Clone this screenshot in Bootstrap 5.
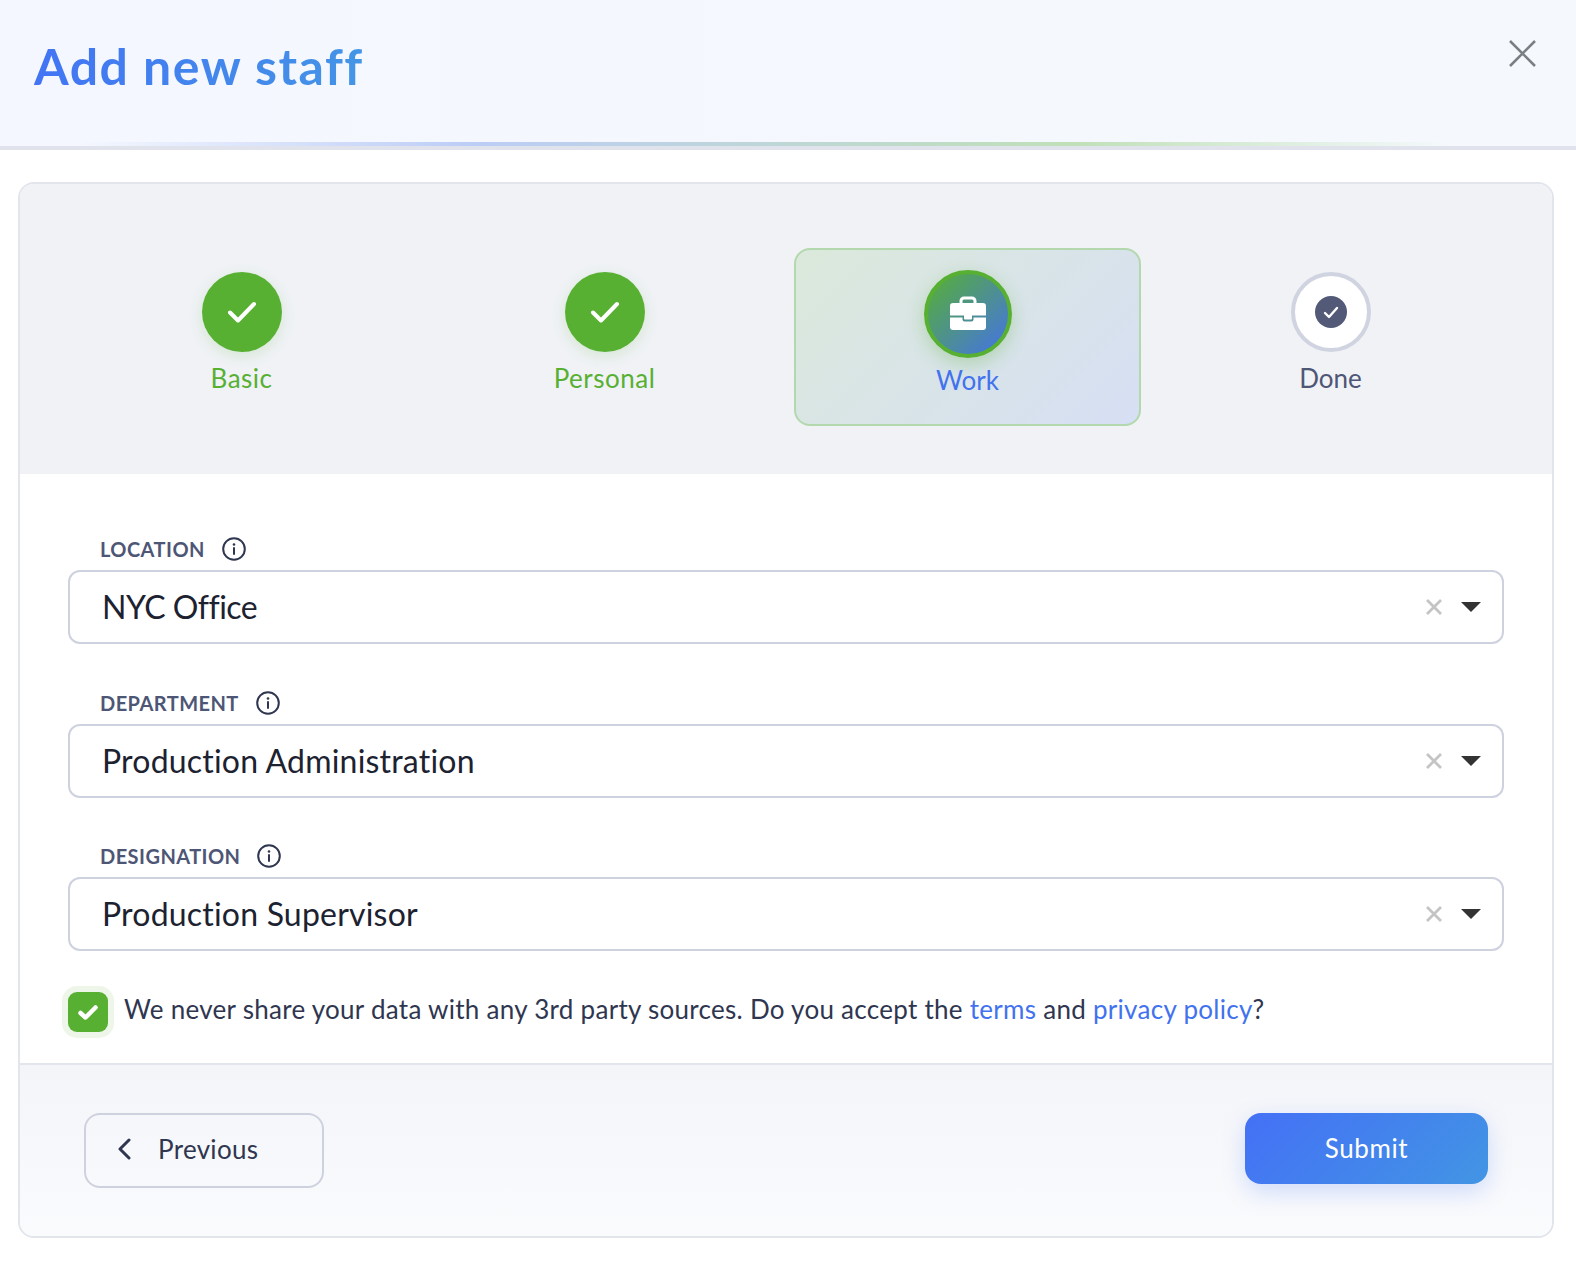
<!DOCTYPE html>
<html lang="en">
<head>
    <meta charset="UTF-8">
    <meta name="viewport" content="width=device-width, initial-scale=1.0">
    <title>Add new staff</title>
    <link href="https://cdn.jsdelivr.net/npm/bootstrap@5.3.0/dist/css/bootstrap.min.css" rel="stylesheet">
    <style>
        body { font-family: "Lato", "Noto Sans", sans-serif; font-variant-ligatures: none; background: #fff; color: #1c2230; }
        .staff-head { height: 150px; background: linear-gradient(90deg, #f4f7ff, #f5f9fd); border-bottom: 4px solid #e0e3ec; padding: 0 40px 0 34px; position: relative; }
        .staff-head::after { content: ""; position: absolute; left: 0; right: 0; bottom: 0; height: 4px; background: linear-gradient(90deg, rgba(192,207,247,0) 5%, #bccdf6 30%, #c0e0b8 68%, rgba(192,224,184,0) 92%); }
        .staff-title { font-size: 50px; font-weight: 700; letter-spacing: 1.5px; line-height: 1; margin: 0; padding-top: 41px; color: #4280ee; background: linear-gradient(90deg, #4274f4, #4495e6); -webkit-background-clip: text; background-clip: text; -webkit-text-fill-color: transparent; }
        .close-x { margin-top: 40px; }
        .staff-card { margin: 32px 22px 0 18px; border: 2px solid #e2e5ec; border-radius: 16px; overflow: hidden; }
        .stepper { background: #f0f2f6; padding: 64px 48px 48px; }
        .step-box { height: 178px; padding-top: 22px; text-align: center; font-size: 26px; line-height: 34px; border: 2px solid transparent; border-radius: 16px; }
        .step-dot { width: 80px; height: 80px; border-radius: 50%; margin: 0 auto 9px; display: flex; align-items: center; justify-content: center; }
        .step-green { color: #58b033; letter-spacing: .5px; }
        .step-green .step-dot { background: #58b033; box-shadow: 0 4px 14px rgba(88,176,51,.18); }
        .step-now { color: #4272ee; padding-top: 20px; background: linear-gradient(135deg, #dbe9db, #d6dff4); border-color: #b3d8ae; }
        .step-now .step-dot { width: 88px; height: 88px; border: 4px solid #58b033; background: linear-gradient(135deg, #58b033, #4372e8); box-shadow: 0 6px 18px rgba(88,176,51,.3); margin-bottom: 5px; }
        .step-now svg { margin-bottom: 2px; }
        .step-todo { color: #4e5676; }
        .step-todo .step-dot { background: #fff; border: 4px solid #d0d4e0; }
        .todo-core { width: 32px; height: 32px; border-radius: 50%; background: #525a78; display: flex; align-items: center; justify-content: center; }
        .staff-body { padding: 57px 48px 31px; background: #fff; }
        .field-block { margin-bottom: 40.500px; }
        .field-label { display: flex; align-items: center; gap: 17px; height: 36px; margin: 0 0 3px 32px; font-size: 20px; font-weight: 700; letter-spacing: .45px; color: #4e5676; }
        .field-box { display: flex; align-items: center; height: 74px; padding: 0 21px 0 32px; border: 2px solid #ced2df; border-radius: 12px; font-size: 32px; letter-spacing: .2px; color: #1c2230; background: #fff; }
        .field-box span { flex-grow: 1; }
        .field-box span.tight-text { letter-spacing: -.5px; }
        .field-clear { margin-right: 19px; }
        .caret-down { width: 0; height: 0; border-left: 10px solid transparent; border-right: 10px solid transparent; border-top: 10px solid #333; }
        .terms-row { display: flex; align-items: center; gap: 16px; font-size: 26px; line-height: 32px; letter-spacing: .28px; color: #2f3650; }
        .terms-row > div { margin-bottom: 6px; }
        .terms-row a { color: #4272ee; text-decoration: none; }
        .terms-check.form-check-input { width: 40px; height: 40px; margin: 0; flex-shrink: 0; border: 0; border-radius: 9px; box-shadow: 0 0 0 6px #eef6ea; background-color: #58b033; background-size: 24px; background-image: url("data:image/svg+xml,%3Csvg xmlns='http://www.w3.org/2000/svg' viewBox='0 0 24 24'%3E%3Cpath d='M4.500 13l5 4.500L19.500 7.500' fill='none' stroke='%23fff' stroke-width='4.500' stroke-linecap='round' stroke-linejoin='round'/%3E%3C/svg%3E"); }
        .staff-foot { display: flex; justify-content: space-between; align-items: flex-start; padding: 48px 64px; border-top: 2px solid #e2e5ec; background: linear-gradient(180deg, #f4f5f9, #fafbfd); }
        .btn.btn-prev { display: flex; align-items: center; gap: 27px; width: 240px; height: 75px; padding: 0 0 2px 31px; border: 2px solid #ced2df; border-radius: 16px; font-size: 26px; letter-spacing: .3px; color: #2f3650; background: transparent; }
        .btn.btn-submit { width: 243px; height: 71px; border: 0; border-radius: 16px; font-size: 26px; letter-spacing: .6px; color: #fff; background: linear-gradient(135deg, #4470f6, #4295e4); box-shadow: 0 8px 24px rgba(66,112,246,.22); }
    </style>
</head>
<body>
    <div class="staff-head d-flex justify-content-between align-items-start">
        <h1 class="staff-title">Add new staff</h1>
        <svg class="close-x" width="27" height="27" viewBox="0 0 27 27"><path d="M1 1l25 25M26 1L1 26" stroke="#7a7f85" stroke-width="2.600" fill="none"/></svg>
    </div>

    <div class="staff-card">
        <div class="stepper">
            <div class="row gx-3">
                <div class="col-3"><div class="step-box step-green">
                    <div class="step-dot"><svg width="30" height="22" viewBox="0 0 30 22"><path d="M3 11.500l8 8L27 3" fill="none" stroke="#fff" stroke-width="4" stroke-linecap="round" stroke-linejoin="round"/></svg></div>
                    Basic
                </div></div>
                <div class="col-3"><div class="step-box step-green">
                    <div class="step-dot"><svg width="30" height="22" viewBox="0 0 30 22"><path d="M3 11.500l8 8L27 3" fill="none" stroke="#fff" stroke-width="4" stroke-linecap="round" stroke-linejoin="round"/></svg></div>
                    Personal
                </div></div>
                <div class="col-3"><div class="step-box step-now">
                    <div class="step-dot"><svg width="36" height="34" viewBox="0 0 36 34"><path d="M11 8V5a3 3 0 0 1 3-3h8a3 3 0 0 1 3 3v3" fill="none" stroke="#fff" stroke-width="3"/><path d="M3 7h30a3 3 0 0 1 3 3v9.500H22v3a1 1 0 0 1-1 1h-6a1 1 0 0 1-1-1v-3H0V10a3 3 0 0 1 3-3z" fill="#fff"/><path d="M0 21.500h12.500v2a2 2 0 0 0 2 2h7a2 2 0 0 0 2-2v-2H36V31a3 3 0 0 1-3 3H3a3 3 0 0 1-3-3z" fill="#fff"/></svg></div>
                    Work
                </div></div>
                <div class="col-3"><div class="step-box step-todo">
                    <div class="step-dot"><div class="todo-core"><svg width="16" height="13" viewBox="0 0 16 13"><path d="M2 7l4 4 8-9" fill="none" stroke="#fff" stroke-width="2.400" stroke-linecap="round" stroke-linejoin="round"/></svg></div></div>
                    Done
                </div></div>
            </div>
        </div>

        <div class="staff-body">
            <div class="field-block">
                <label class="field-label">LOCATION <svg width="24" height="24" viewBox="0 0 24 24"><circle cx="12" cy="12" r="10.800" fill="none" stroke="#2f3650" stroke-width="2"/><path d="M12 11v6" stroke="#2f3650" stroke-width="2" stroke-linecap="round"/><circle cx="12" cy="7.500" r="1.300" fill="#2f3650"/></svg></label>
                <div class="field-box"><span class="tight-text">NYC Office</span><svg class="field-clear" width="16" height="16" viewBox="0 0 16 16"><path d="M1 1l14 14M15 1L1 15" stroke="#c4c4c4" stroke-width="2.800"/></svg><div class="caret-down"></div></div>
            </div>
            <div class="field-block">
                <label class="field-label">DEPARTMENT <svg width="24" height="24" viewBox="0 0 24 24"><circle cx="12" cy="12" r="10.800" fill="none" stroke="#2f3650" stroke-width="2"/><path d="M12 11v6" stroke="#2f3650" stroke-width="2" stroke-linecap="round"/><circle cx="12" cy="7.500" r="1.300" fill="#2f3650"/></svg></label>
                <div class="field-box"><span>Production Administration</span><svg class="field-clear" width="16" height="16" viewBox="0 0 16 16"><path d="M1 1l14 14M15 1L1 15" stroke="#c4c4c4" stroke-width="2.800"/></svg><div class="caret-down"></div></div>
            </div>
            <div class="field-block">
                <label class="field-label">DESIGNATION <svg width="24" height="24" viewBox="0 0 24 24"><circle cx="12" cy="12" r="10.800" fill="none" stroke="#2f3650" stroke-width="2"/><path d="M12 11v6" stroke="#2f3650" stroke-width="2" stroke-linecap="round"/><circle cx="12" cy="7.500" r="1.300" fill="#2f3650"/></svg></label>
                <div class="field-box"><span>Production Supervisor</span><svg class="field-clear" width="16" height="16" viewBox="0 0 16 16"><path d="M1 1l14 14M15 1L1 15" stroke="#c4c4c4" stroke-width="2.800"/></svg><div class="caret-down"></div></div>
            </div>
            <div class="terms-row">
                <input class="form-check-input terms-check" type="checkbox" checked>
                <div>We never share your data with any 3rd party sources. Do you accept the <a href="#">terms</a> and <a href="#">privacy policy</a>?</div>
            </div>
        </div>

        <div class="staff-foot">
            <button class="btn btn-prev"><svg width="14" height="22" viewBox="0 0 14 22"><path d="M12 2L3 11l9 9" fill="none" stroke="#2f3650" stroke-width="3" stroke-linecap="round" stroke-linejoin="round"/></svg>Previous</button>
            <button class="btn btn-submit">Submit</button>
        </div>
    </div>
</body>
</html>
